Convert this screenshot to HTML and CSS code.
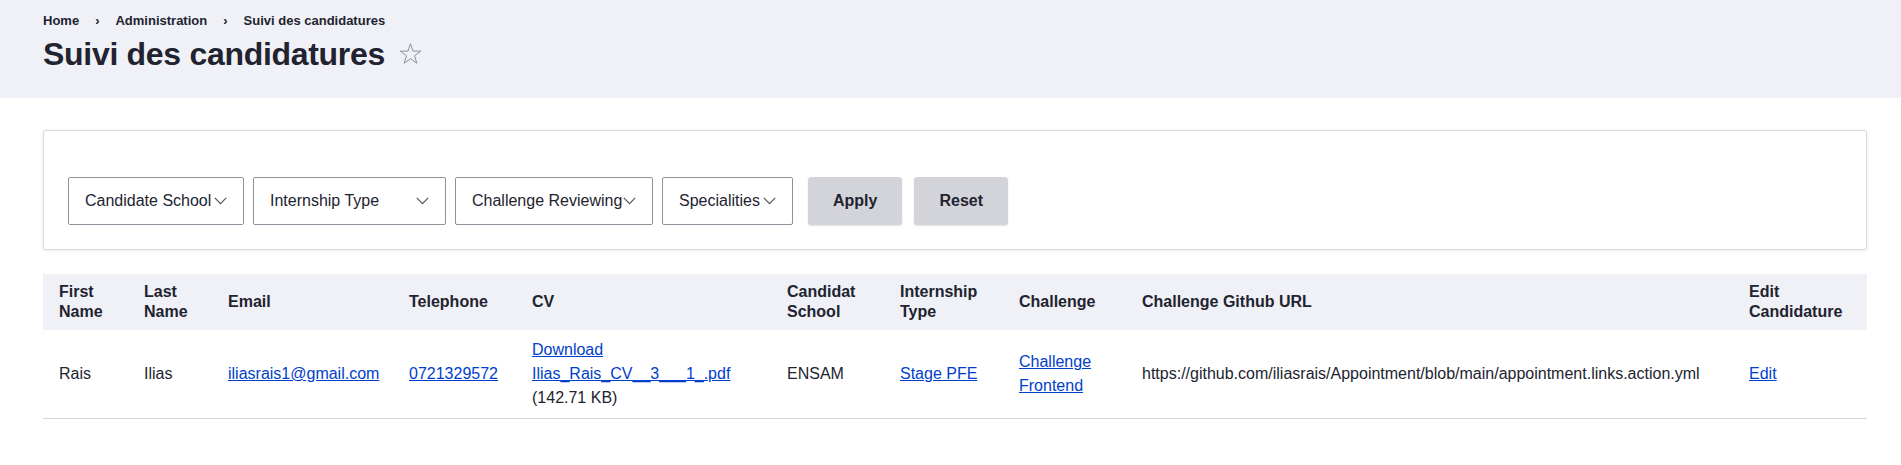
FILE: index.html
```html
<!DOCTYPE html>
<html lang="fr">
<head>
<meta charset="utf-8">
<title>Suivi des candidatures</title>
<link rel="stylesheet" href="styles.css">
</head>
<body>
<header class="content-header">
  <nav class="breadcrumb">
    <a class="crumb" href="#">Home</a>
    <a class="crumb" href="#">Administration</a>
    <span class="crumb">Suivi des candidatures</span>
  </nav>
  <div class="title-row">
    <h1 class="page-title">Suivi des candidatures</h1>
    <svg class="star" viewBox="0 0 24 24" width="23" height="23" aria-hidden="true">
      <polygon points="12,0.8 14.59,8.44 22.7,8.5 16.18,13.36 18.6,21.1 12,16.4 5.4,21.1 7.82,13.36 1.3,8.5 9.41,8.44" fill="none" stroke="#8a8c94" stroke-width="1" stroke-linejoin="miter"/>
    </svg>
  </div>
</header>

<main class="page">
  <form class="filters">
    <div class="select select-school"><span>Candidate School</span><svg class="chev" viewBox="0 0 13 8" width="13" height="8"><polyline points="0.8,0.8 6.5,6.6 12.2,0.8" fill="none" stroke="#545560" stroke-width="1.2"/></svg></div>
    <div class="select select-type"><span>Internship Type</span><svg class="chev" viewBox="0 0 13 8" width="13" height="8"><polyline points="0.8,0.8 6.5,6.6 12.2,0.8" fill="none" stroke="#545560" stroke-width="1.2"/></svg></div>
    <div class="select select-review"><span>Challenge Reviewing</span><svg class="chev" viewBox="0 0 13 8" width="13" height="8"><polyline points="0.8,0.8 6.5,6.6 12.2,0.8" fill="none" stroke="#545560" stroke-width="1.2"/></svg></div>
    <div class="select select-spec"><span>Specialities</span><svg class="chev" viewBox="0 0 13 8" width="13" height="8"><polyline points="0.8,0.8 6.5,6.6 12.2,0.8" fill="none" stroke="#545560" stroke-width="1.2"/></svg></div>
    <div class="actions">
      <button type="button" class="btn">Apply</button>
      <button type="button" class="btn">Reset</button>
    </div>
  </form>

  <table class="results">
    <colgroup>
      <col class="w-first"><col class="w-last"><col class="w-email"><col class="w-tel"><col class="w-cv">
      <col class="w-school"><col class="w-type"><col class="w-chal"><col class="w-url"><col class="w-edit">
    </colgroup>
    <thead>
      <tr>
        <th>First Name</th>
        <th>Last Name</th>
        <th>Email</th>
        <th>Telephone</th>
        <th>CV</th>
        <th>Candidat School</th>
        <th>Internship Type</th>
        <th>Challenge</th>
        <th>Challenge Github URL</th>
        <th>Edit Candidature</th>
      </tr>
    </thead>
    <tbody>
      <tr>
        <td>Rais</td>
        <td>Ilias</td>
        <td><a href="#">iliasrais1@gmail.com</a></td>
        <td><a href="#">0721329572</a></td>
        <td><a href="#">Download Ilias_Rais_CV__3___1_.pdf</a><br>(142.71 KB)</td>
        <td>ENSAM</td>
        <td><a href="#">Stage PFE</a></td>
        <td><a href="#">Challenge Frontend</a></td>
        <td class="nowrap">https://github.com/iliasrais/Appointment/blob/main/appointment.links.action.yml</td>
        <td><a href="#">Edit</a></td>
      </tr>
    </tbody>
  </table>
</main>
</body>
</html>
```

FILE: styles.css
```css
* { box-sizing: border-box; }

html, body {
  margin: 0;
  padding: 0;
  background: #ffffff;
  color: #222330;
  font-family: "Liberation Sans", Arial, sans-serif;
  font-size: 16px;
}

a { color: #003ecc; }

.content-header {
  background: #f0f1f6;
  padding: 13px 34px 24px 43px;
}

.breadcrumb {
  display: flex;
  align-items: center;
  font-size: 13px;
  line-height: 16px;
  font-weight: 700;
}

.crumb {
  color: #222330;
  text-decoration: none;
}

.crumb + .crumb::before {
  content: "›";
  display: inline-block;
  margin: 0 16px;
}

.title-row {
  display: flex;
  align-items: center;
  gap: 14px;
  margin-top: 5px;
}

.page-title {
  margin: 0;
  font-size: 32px;
  line-height: 40px;
  font-weight: 700;
  letter-spacing: -0.3px;
}

.star { display: block; }

.page {
  padding: 32px 34px 0 43px;
}

.filters {
  display: flex;
  align-items: center;
  border: 1px solid #d9dae0;
  border-radius: 2px;
  box-shadow: 0 1px 4px rgba(0, 0, 0, 0.08);
  padding: 46px 24px 24px 24px;
  margin: 0 0 24px 0;
}

.select {
  display: flex;
  align-items: center;
  height: 48px;
  border: 1px solid #8e929c;
  border-radius: 2px;
  padding: 0 16px 0 16px;
  margin-right: 9px;
  line-height: 24px;
  color: #222330;
  background: #fff;
}

.select span { white-space: nowrap; }
.select .chev { margin-left: auto; flex: none; }

.select-school { width: 176px; }
.select-type { width: 193px; }
.select-review { width: 198px; }
.select-spec { width: 131px; margin-right: 0; }

.actions {
  display: flex;
  gap: 12px;
  margin-left: 15px;
}

.btn {
  height: 48px;
  padding: 0 24px;
  border: 1px solid #d3d4d9;
  border-radius: 3px;
  background: #d3d4d9;
  color: #222330;
  font-family: inherit;
  font-size: 16px;
  font-weight: 700;
  box-shadow: 0 1px 2px rgba(0, 0, 0, 0.12);
}

.results {
  width: 100%;
  table-layout: fixed;
  border-collapse: collapse;
}

.w-first { width: 85px; }
.w-last { width: 84px; }
.w-email { width: 181px; }
.w-tel { width: 123px; }
.w-cv { width: 255px; }
.w-school { width: 113px; }
.w-type { width: 119px; }
.w-chal { width: 123px; }
.w-url { width: 607px; }
.w-edit { width: 134px; }

.results th {
  background: #f0f1f6;
  text-align: left;
  font-weight: 700;
  line-height: 20px;
  padding: 8px 16px;
  vertical-align: middle;
}

.results td {
  padding: 8px 16px;
  line-height: 24px;
  vertical-align: middle;
  border-bottom: 1px solid #d4d4d9;
}

.nowrap { white-space: nowrap; }
```
